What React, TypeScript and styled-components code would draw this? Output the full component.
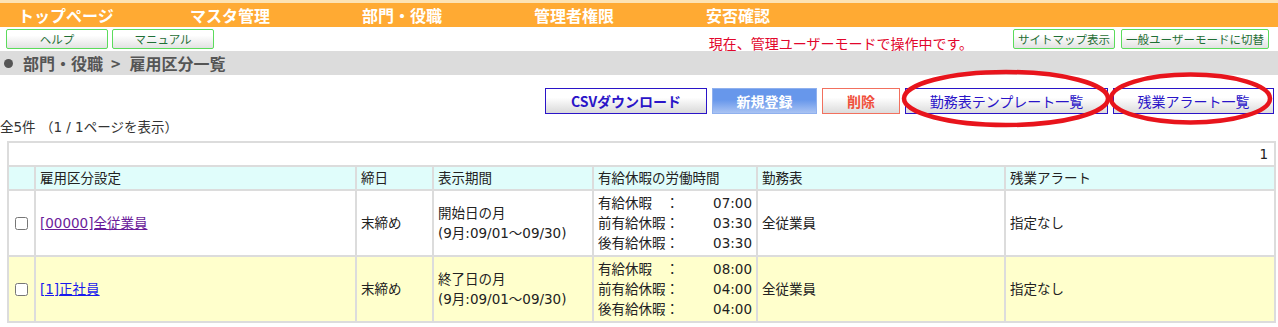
import React from "react";
import styled, { createGlobalStyle, css } from "styled-components";

const GlobalStyle = createGlobalStyle`
  body {
    margin: 0;
    background: #fff;
    font-family: "Noto Sans CJK JP", "Noto Sans", sans-serif;
    font-size: 14px;
    color: #222;
  }
`;

const latin = `"DejaVu Sans", "Noto Sans CJK JP", sans-serif`;

const Page = styled.div`
  position: relative;
  width: 1278px;
  height: 327px;
  overflow: hidden;
`;

const TopStrip = styled.div`
  height: 3px;
  background: #fde3b4;
`;

const MenuBar = styled.nav`
  display: flex;
  height: 24px;
  padding-left: 18px;
  background: #ffaa33;
`;

const MenuItem = styled.div`
  width: 172px;
  color: #fff;
  font-size: 16px;
  font-weight: bold;
  line-height: 24px;
`;

const SubBar = styled.div`
  display: flex;
  align-items: center;
  height: 24px;
  padding: 0 9px 0 6px;
  gap: 4px;
`;

const GreenButton = styled.div<{ $w: number; $ml?: number }>`
  width: ${(p) => p.$w}px;
  height: 20px;
  box-sizing: border-box;
  margin-left: ${(p) => p.$ml ?? 0}px;
  border: 1px solid #5bdc5b;
  border-radius: 2px;
  background: linear-gradient(#ffffff 30%, #e2e2e2);
  color: #1f6f35;
  font-size: 11.5px;
  line-height: 18px;
  text-align: center;
  white-space: nowrap;
`;

const Notice = styled.div`
  margin-left: auto;
  margin-right: 36px;
  margin-top: 8px;
  color: #e2062c;
  font-size: 14px;
  line-height: 16px;
`;

const Breadcrumb = styled.div`
  display: flex;
  align-items: center;
  height: 24px;
  padding-left: 4px;
  background: #dcdcdc;
  color: #555;
  font-size: 16px;
  font-weight: bold;
`;

const Bullet = styled.span`
  width: 9px;
  height: 9px;
  margin-right: 10px;
  border-radius: 50%;
  background: #555;
`;

const Arrow = styled.span`
  margin: 0 9px 0 8px;
`;

const ActionRow = styled.div`
  display: flex;
  justify-content: flex-end;
  gap: 5px;
  margin-top: 13px;
  padding-right: 4px;
`;

type Variant = "csv" | "new" | "del" | "link";

const variants = {
  csv: css`
    border-color: #2a14c8;
    background: linear-gradient(#ffffff 35%, #d9d9d9);
    color: #2a14c8;
    font-weight: bold;
  `,
  new: css`
    border-color: #8fb0ee;
    background: linear-gradient(#6797eb 45%, #a9c3f3);
    color: #fff;
    font-weight: bold;
  `,
  del: css`
    border-color: #f2705e;
    background: linear-gradient(#ffffff 35%, #dcdcdc);
    color: #f0503c;
    font-weight: bold;
  `,
  link: css`
    border-color: #2a14c8;
    background: linear-gradient(#ffffff 35%, #dcdcdc);
    color: #2a14c8;
  `,
};

const ActionButton = styled.div<{ $w: number; $v: Variant }>`
  width: ${(p) => p.$w}px;
  height: 26px;
  box-sizing: border-box;
  border: 1px solid;
  font-size: 14px;
  line-height: 24px;
  text-align: center;
  white-space: nowrap;
  ${(p) => variants[p.$v]}
`;

const Count = styled.div`
  margin-top: 6px;
  color: #333;
  font-family: ${latin};
  font-size: 13.5px;
  line-height: 14px;
`;

const Table = styled.table`
  margin: 7px 0 0 7px;
  width: 1267px;
  table-layout: fixed;
  border-collapse: collapse;
  border: 2px solid #dcdcdc;
  font-family: ${latin};
  font-size: 13.5px;
`;

const Cell = styled.td<{ $align?: string }>`
  border: 2px solid #dcdcdc;
  padding: 0 4px;
  text-align: ${(p) => p.$align ?? "left"};
  vertical-align: middle;
  line-height: 20px;
  white-space: nowrap;
`;

const PagerRow = styled.tr`
  height: 24px;
  background: #fff;
  td {
    padding-right: 6px;
  }
`;

const HeadRow = styled.tr`
  height: 24px;
  background: #e0fdfb;
  color: #222;
`;

const DataRow = styled.tr<{ $alt?: boolean }>`
  height: 66px;
  background: ${(p) => (p.$alt ? "#ffffcc" : "#fff")};
`;

const Check = styled.input`
  display: block;
  width: 13px;
  height: 13px;
  margin: 0 auto;
`;

const NameLink = styled.a<{ $visited?: boolean }>`
  color: ${(p) => (p.$visited ? "#6a1b9a" : "#1a1aee")};
  text-decoration: underline;
`;

const LeaveLine = styled.div`
  display: flex;
  justify-content: space-between;
  line-height: 20px;
`;

const Overlay = styled.svg`
  position: absolute;
  top: 0;
  left: 0;
  pointer-events: none;
`;

const menu = ["トップページ", "マスタ管理", "部門・役職", "管理者権限", "安否確認"];

const rows = [
  {
    code: "[00000]全従業員",
    visited: true,
    period: "開始日の月",
    leave: [
      ["有給休暇　：", "07:00"],
      ["前有給休暇：", "03:30"],
      ["後有給休暇：", "03:30"],
    ],
  },
  {
    code: "[1]正社員",
    visited: false,
    period: "終了日の月",
    leave: [
      ["有給休暇　：", "08:00"],
      ["前有給休暇：", "04:00"],
      ["後有給休暇：", "04:00"],
    ],
  },
];

const App = () => {
  return (
    <Page>
      <GlobalStyle />
      <TopStrip />
      <MenuBar>
        {menu.map((m) => (
          <MenuItem key={m}>{m}</MenuItem>
        ))}
      </MenuBar>
      <SubBar>
        <GreenButton $w={102}>ヘルプ</GreenButton>
        <GreenButton $w={102}>マニュアル</GreenButton>
        <Notice>現在、管理ユーザーモードで操作中です。</Notice>
        <GreenButton $w={102}>サイトマップ表示</GreenButton>
        <GreenButton $w={148} $ml={2}>
          一般ユーザーモードに切替
        </GreenButton>
      </SubBar>
      <Breadcrumb>
        <Bullet />
        部門・役職<Arrow>&gt;</Arrow>雇用区分一覧
      </Breadcrumb>
      <ActionRow>
        <ActionButton $w={162} $v="csv">CSVダウンロード</ActionButton>
        <ActionButton $w={105} $v="new">新規登録</ActionButton>
        <ActionButton $w={78} $v="del">削除</ActionButton>
        <ActionButton $w={203} $v="link">勤務表テンプレート一覧</ActionButton>
        <ActionButton $w={161} $v="link">残業アラート一覧</ActionButton>
      </ActionRow>
      <Count>全5件 （1 / 1ページを表示）</Count>
      <Table>
        <colgroup>
          <col style={{ width: 27 }} />
          <col style={{ width: 321 }} />
          <col style={{ width: 77 }} />
          <col style={{ width: 160 }} />
          <col style={{ width: 164 }} />
          <col style={{ width: 248 }} />
          <col style={{ width: 270 }} />
        </colgroup>
        <tbody>
          <PagerRow>
            <Cell colSpan={7} $align="right">
              1
            </Cell>
          </PagerRow>
          <HeadRow>
            <Cell />
            <Cell>雇用区分設定</Cell>
            <Cell>締日</Cell>
            <Cell>表示期間</Cell>
            <Cell>有給休暇の労働時間</Cell>
            <Cell>勤務表</Cell>
            <Cell>残業アラート</Cell>
          </HeadRow>
          {rows.map((r, i) => (
            <DataRow key={r.code} $alt={i % 2 === 1}>
              <Cell>
                <Check type="checkbox" />
              </Cell>
              <Cell>
                <NameLink href="#" $visited={r.visited}>
                  {r.code}
                </NameLink>
              </Cell>
              <Cell>末締め</Cell>
              <Cell>
                <div>{r.period}</div>
                <div>(9月:09/01～09/30)</div>
              </Cell>
              <Cell>
                {r.leave.map(([label, time]) => (
                  <LeaveLine key={label}>
                    <span>{label}</span>
                    <span>{time}</span>
                  </LeaveLine>
                ))}
              </Cell>
              <Cell>全従業員</Cell>
              <Cell>指定なし</Cell>
            </DataRow>
          ))}
        </tbody>
      </Table>
      <Overlay width={1278} height={327}>
        <ellipse cx={1006} cy={98.5} rx={102} ry={26.5} fill="none" stroke="#e8141c" strokeWidth={4.5} />
        <ellipse cx={1190.5} cy={98.5} rx={79.5} ry={24} fill="none" stroke="#e8141c" strokeWidth={4.5} />
      </Overlay>
    </Page>
  );
};

export default App;
